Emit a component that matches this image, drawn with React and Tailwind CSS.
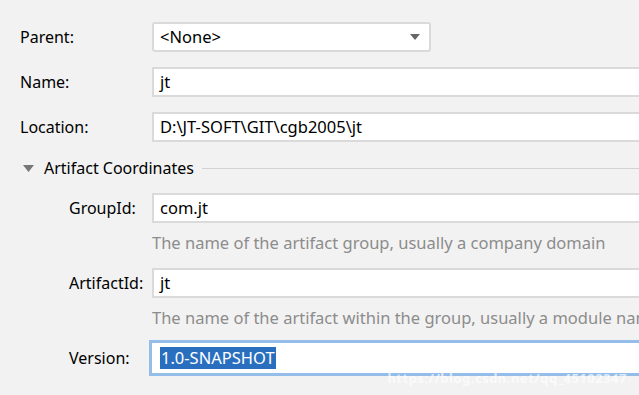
import React from 'react';

const font = { fontFamily: '"Noto Sans", "Open Sans", sans-serif' };

const Field = ({ children, className = '' }) => (
    <div className={`-mr-[40px] flex h-[30px] flex-1 items-center border-2 border-[#dadada] bg-white pl-[6px] text-[16.5px] text-black ${className}`}>
        {children}
    </div>
);

const Row = ({ label, labelClass = 'w-[132px]', children, className = '' }) => (
    <div className={`flex items-center ${className}`}>
        <div className={`shrink-0 text-[16px] text-black ${labelClass}`}>{label}</div>
        {children}
    </div>
);

const Hint = ({ children, className = '' }) => (
    <div className={`h-[23px] whitespace-nowrap pl-[132px] text-[16.5px] leading-[23px] text-[#8c8c8c] ${className}`}>{children}</div>
);

export default function App() {
    return (
        <div className="relative h-[395px] w-[639px] overflow-hidden bg-[#f2f2f2] pl-[20px] pt-[22px]" style={font}>
            {/* parent dropdown */}
            <Row label="Parent:">
                <div className="flex h-[30px] w-[279px] items-center justify-between rounded-[3px] border-2 border-[#dadada] bg-white pl-[6px] pr-[9px] text-[16.5px]">
                    <span>&lt;None&gt;</span>
                    <svg width="10" height="6" viewBox="0 0 10 6"><path d="M0 0H10L5 6Z" fill="#666" /></svg>
                </div>
            </Row>

            <Row label="Name:" className="mt-[15px]">
                <Field>jt</Field>
            </Row>

            <Row label="Location:" className="mt-[15px]">
                <Field>D:\JT-SOFT\GIT\cgb2005\jt</Field>
            </Row>

            {/* section header */}
            <div className="mt-[14px] flex h-[24px] items-center">
                <svg width="11" height="7" viewBox="0 0 11 7" className="ml-[3px]"><path d="M0 0H11L5.5 7Z" fill="#777" /></svg>
                <span className="ml-[10px] text-[16px] text-black">Artifact Coordinates</span>
                <div className="ml-[8px] -mr-[20px] h-px flex-1 bg-[#d2d2d2]" />
            </div>

            <Row label="GroupId:" labelClass="w-[132px] pl-[49px]" className="mt-[13px]">
                <Field>com.jt</Field>
            </Row>
            <Hint className="mt-[8px]">The name of the artifact group, usually a company domain</Hint>

            <Row label="ArtifactId:" labelClass="w-[132px] pl-[49px]" className="mt-[14px]">
                <Field>jt</Field>
            </Row>
            <Hint className="mt-[8px]">The name of the artifact within the group, usually a module name</Hint>

            <Row label="Version:" labelClass="w-[129px] pl-[49px]" className="mt-[11px]">
                <div className="-mr-[40px] flex h-[36px] flex-1 items-center border-[3px] border-[#94bdea] bg-white pl-[8px] text-[16.5px]">
                    <span className="bg-[#2a6fbf] px-[1px] leading-[22px] text-white">1.0-SNAPSHOT</span>
                </div>
            </Row>

            <div className="absolute bottom-[7px] right-[12px] text-[13px] font-bold tracking-[0.5px] text-white/70">
                https://blog.csdn.net/qq_45102347
            </div>
        </div>
    );
}
